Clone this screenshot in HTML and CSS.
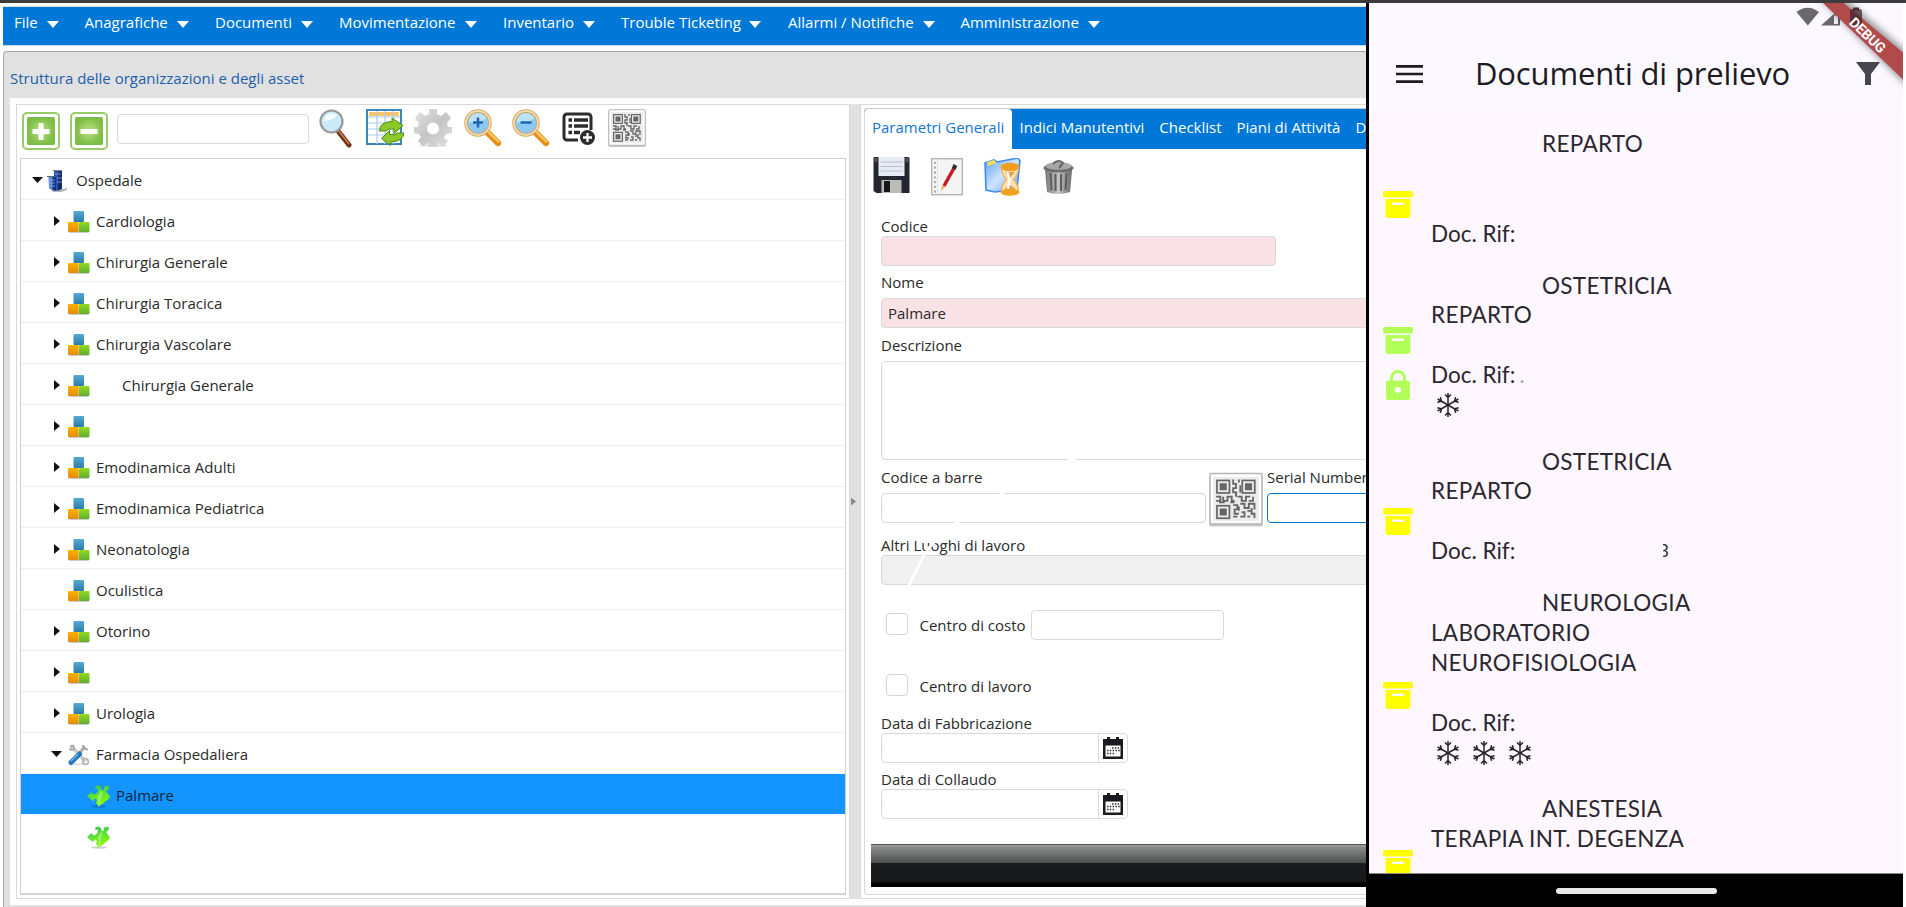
FILE: index.html
```html
<!DOCTYPE html>
<html lang="it">
<head>
<meta charset="utf-8">
<title>Struttura delle organizzazioni e degli asset</title>
<link rel="stylesheet" href="styles.css">
</head>
<body>
<svg class="defs" aria-hidden="true">
  <defs>
    <linearGradient id="gOrange" x1="0" y1="0" x2="0" y2="1"><stop offset="0" stop-color="#fbb400"/><stop offset="1" stop-color="#e58a0c"/></linearGradient>
    <linearGradient id="gGreen" x1="0" y1="0" x2="0" y2="1"><stop offset="0" stop-color="#93db1d"/><stop offset="1" stop-color="#5fae35"/></linearGradient>
    <linearGradient id="gBlue" x1="0" y1="0" x2="0" y2="1"><stop offset="0" stop-color="#55aad6"/><stop offset="1" stop-color="#2c7ba6"/></linearGradient>
    <linearGradient id="gPuzzle" x1="0" y1="0" x2=".3" y2="1"><stop offset="0" stop-color="#3fc04f"/><stop offset=".4" stop-color="#4fdc3c"/><stop offset="1" stop-color="#8dfa05"/></linearGradient>
    <radialGradient id="gBtn"><stop offset="0" stop-color="#b9e088"/><stop offset="1" stop-color="#7fbf45"/></radialGradient>
    <linearGradient id="gGear" x1="0" y1="0" x2="1" y2="1"><stop offset="0" stop-color="#e4e4e4"/><stop offset=".5" stop-color="#c4c4c4"/><stop offset="1" stop-color="#e2e2e2"/></linearGradient>
    <linearGradient id="gFolder" x1="0" y1="0" x2="1" y2="1"><stop offset="0" stop-color="#5aa0f5"/><stop offset=".5" stop-color="#cfe4fd"/><stop offset="1" stop-color="#5aa0f5"/></linearGradient>
    <linearGradient id="gBin" x1="0" y1="0" x2="1" y2="0"><stop offset="0" stop-color="#777"/><stop offset=".5" stop-color="#c4c4c4"/><stop offset="1" stop-color="#6a6a6a"/></linearGradient>
  </defs>
  <symbol id="cubes" viewBox="0 0 22 22">
    <rect x="1" y="20" width="20" height="2" rx="1" fill="#ccc"/>
    <rect x="5.5" y="0" width="10.5" height="11" rx="1" fill="url(#gBlue)"/>
    <rect x="0" y="11" width="10.7" height="10" rx="1" fill="url(#gOrange)"/>
    <rect x="11" y="11" width="10.5" height="10" rx="1" fill="url(#gGreen)"/>
  </symbol>
  <symbol id="building" viewBox="0 0 20 22">
    <path d="M3 19h14l3-1v2l-6 2H6z" fill="#b5b5b5"/>
    <path d="M7 1h8v17l-5 3-3-3z" fill="#2a52b4"/><path d="M11 1h4v18l-4 1.500z" fill="#142a6b"/>
    <path d="M1.500 7H7v13l-5-1.500z" fill="#5b87dc"/><path d="M5.500 7H9v14l-3.500-1z" fill="#17327e"/>
    <path d="M2 10h6M2 13h6M2 16h6M8 4h6M10 8h5M10 12h5" stroke="#a5c0f0" stroke-width=".7"/><path d="M0 6.500h7M6 .7h9" stroke="#666" stroke-width="1"/>
  </symbol>
  <symbol id="tools" viewBox="0 0 22 22">
    <path d="M4 19.500h15l-3 1.500H6z" fill="#ddd"/>
    <path d="M3.500 2.500l14 15" stroke="#a9a9a9" stroke-width="3.200" stroke-linecap="round"/>
    <path d="M3.500 3l14 14.500" stroke="#dedede" stroke-width="1.500"/>
    <circle cx="17.500" cy="17.500" r="3.300" fill="#c9c9c9" stroke="#999" stroke-width=".7"/><circle cx="18" cy="18" r="1.200" fill="#fff"/>
    <path d="M1.500 4.500Q2.500 6.500 5.500 5.500Q6.500 3 4.500 1" fill="none" stroke="#aaa" stroke-width="1.800"/>
    <path d="M10 11l7-8.500" stroke="#b0b0b0" stroke-width="3"/><path d="M15 1q0 4 5 4.500" fill="none" stroke="#a5a5a5" stroke-width="2"/>
    <path d="M3 18.500l8.500-8.500" stroke="#2878bd" stroke-width="5" stroke-linecap="round"/><path d="M3 17l7-7" stroke="#72b4e8" stroke-width="1.200"/>
  </symbol>
  <symbol id="puzzle" viewBox="0 0 23 23">
    <ellipse cx="12" cy="21.500" rx="8" ry="1.200" fill="#000" opacity=".2"/>
    <path d="M12 22L9 17.500Q11 14.500 8 13.500Q6 14 6.500 16.500L0 11L4.500 7Q6 10 8.500 9Q11 7 11 4L8 3.500Q8 .5 11.500 .5Q14.500 1 14 3.500L15.500 5Q18 5 16.500 2.500Q18 0 21.500 1L22 3Q21 6 19 6L23 11.500L21.500 14L17 17.500Q16 19 13 20z" fill="url(#gPuzzle)"/>
    <path d="M12 22L11 17Q12.500 13 10 12L12.500 8L14.500 5L16 8L14 13z" fill="#c9ffa6" opacity=".45"/>
  </symbol>
  <symbol id="qr" viewBox="0 0 38 38">
    <rect x="0" y="2" width="38" height="36" rx="2" fill="#c9c9c9"/>
    <rect x=".75" y=".75" width="36.500" height="35.500" rx="1" fill="#fff" stroke="#b5b5b5" stroke-width="1"/>
    <rect x="3" y="3" width="32" height="31" fill="#ececec"/>
    <g fill="none" stroke="#666" stroke-width="1.200"><rect x="5.600" y="5.600" width="8.800" height="8.800"/><rect x="23.400" y="5.600" width="8.800" height="8.800"/><rect x="5.600" y="23.400" width="8.800" height="8.800"/></g>
    <path d="M7.500 7.500h5v5h-5zM25.300 7.500h5v5h-5zM7.500 25.300h5v5h-5z" fill="#666"/>
    <path d="M17 5v3h2v3h-2v3h3M21 5v2M22 9v5M19 14v3M5 17h3v3H5M10 17v3h3v-3h3v3h2M7 21h4M15 21h3M20 17h3v3h3v-3h3M31 17v3h-3M17 23h3v3h-2v3h3M22 22h3v3h3v-3h4v4M23 28h2v3h-3M27 27h3v2h2v3M17 31h3M27 31h2M21 24v3M30 25v2" fill="none" stroke="#666" stroke-width="1.300"/>
  </symbol>
  <symbol id="zoomglass" viewBox="0 0 38 38">
    <path d="M23 23l11 11" stroke="#e58f1b" stroke-width="6.500" stroke-linecap="round"/><path d="M24 22.500l10.500 10" stroke="#ffc25c" stroke-width="2.500" stroke-linecap="round"/>
    <circle cx="14" cy="14" r="12" fill="#8cc8f2" stroke="#d0a660" stroke-width="3.500"/><circle cx="14" cy="14" r="12" fill="none" stroke="#f4dba8" stroke-width="1.800"/>
    <path d="M4.500 13a9.500 9.500 0 0 1 18-3.500Q14 15 4.500 13z" fill="#cbe8fb" opacity=".8"/>
  </symbol>
  <symbol id="cal" viewBox="0 0 20 22">
    <path d="M0 2h4V0h3v2h6V0h3v2h4v20H0z" fill="#1b1b1f"/><path d="M2.500 8.500h15v11h-15z" fill="#fff"/>
    <path d="M9 11h8M4 13.500h13M4 16.500h8" stroke="#333" stroke-width="1.300" stroke-dasharray="1.500 1.300"/>
  </symbol>
  <symbol id="box" viewBox="0 0 30 27">
    <rect x="0" y="0" width="30" height="6.500" rx="1.700"/>
    <path fill-rule="evenodd" d="M2.500 8h25v16a3 3 0 0 1-3 3h-19a3 3 0 0 1-3-3zM10.200 11.500a1 1 0 0 0 0 2.500h9.600a1 1 0 0 0 0-2.500z"/>
  </symbol>
  <symbol id="snow" viewBox="0 0 24 24">
    <g fill="none" stroke="#27232b" stroke-width="1.500">
      <path d="M12 0v24M9 1.500l3 3 3-3M9 22.500l3-3 3 3"/>
      <path transform="rotate(60 12 12)" d="M12 0v24M9 1.500l3 3 3-3M9 22.500l3-3 3 3"/>
      <path transform="rotate(120 12 12)" d="M12 0v24M9 1.500l3 3 3-3M9 22.500l3-3 3 3"/>
    </g>
  </symbol>
</svg>

<div class="app">
  <nav class="menu">
    <span class="menu-item m1">File</span>
    <span class="menu-item m2">Anagrafiche</span>
    <span class="menu-item m3">Documenti</span>
    <span class="menu-item m4">Movimentazione</span>
    <span class="menu-item m5">Inventario</span>
    <span class="menu-item m6">Trouble Ticketing</span>
    <span class="menu-item m7">Allarmi / Notifiche</span>
    <span class="menu-item m8">Amministrazione</span>
  </nav>

  <main class="window">
    <h1 class="window-title">Struttura delle organizzazioni e degli asset</h1>
    <div class="window-body">
      <section class="left">
        <div class="toolbar">
          <svg class="t-plus" viewBox="0 0 38 38"><rect x="1" y="1" width="36" height="36" rx="4" fill="#fff" stroke="#97cc68" stroke-width="2"/><rect x="5.700" y="5.700" width="26.600" height="26.600" rx="1" fill="url(#gBtn)" stroke="#7ab648" stroke-width="1.200"/><path d="M16.500 11h5v6h6v5h-6v6h-5v-6h-6v-5h6z" fill="#fff"/></svg>
          <svg class="t-minus" viewBox="0 0 38 38"><rect x="1" y="1" width="36" height="36" rx="4" fill="#fff" stroke="#97cc68" stroke-width="2"/><rect x="5.700" y="5.700" width="26.600" height="26.600" rx="1" fill="url(#gBtn)" stroke="#7ab648" stroke-width="1.200"/><path d="M10.500 17h17v5h-17z" fill="#fff"/></svg>
          <input class="search" type="text">
          <svg class="t-find" viewBox="0 0 34 39"><path d="M19 22l11 14" stroke="#6e3216" stroke-width="5" stroke-linecap="round"/><path d="M19 21l11 14" stroke="#c77c4c" stroke-width="1.700"/><circle cx="12.500" cy="12.500" r="11" fill="#c9ebf8" stroke="#999" stroke-width="2.200"/><path d="M5 12a8 8 0 0 1 13-6Q14 12 5 12z" fill="#f1fbff"/></svg>
          <svg class="t-table" viewBox="0 0 38 38"><rect x="1" y="1" width="34" height="34" fill="#fff" stroke="#3a88bd" stroke-width="2"/><path d="M3 3h30v4H3z" fill="#fdc566"/><path d="M2 8h32M2 14h32M2 20h32M2 26h32M11 2v33M19 2v33M27 2v33" stroke="#a8cdea" stroke-width="1.200"/><path d="M13.500 22q0-9 12.500-9.500V9l11 7.500-9 8V20q-6-1-8 2z" fill="#8cc929" stroke="#4a8d18"/><path d="M38 24q-1 8.500-13.500 9v3.500l-9-7 8-8v4q6 1 8-1.500z" fill="#8cc929" stroke="#4a8d18"/></svg>
          <svg class="t-gear" viewBox="0 0 38 38"><path d="M6 36.500h26" stroke="#ddd" stroke-width="2"/><path fill="url(#gGear)" fill-rule="evenodd" d="M15 0h8v5l4 2 5-4 5 6-4 5 1 4h4v6l-6 1-2 4 4 3-5 5-5-3-1 4h-8l-1-4-5 3-5-5 3-4-2-3-5-1v-6h4l1-4-4-5 5-6 5 4 4-2zM19 13.500a6 6 0 1 0 0 12 6 6 0 0 0 0-12z"/></svg>
          <svg class="t-zin" viewBox="0 0 38 38"><use href="#zoomglass"/><path d="M14 8.500v10M9 13.500h10" stroke="#1768b0" stroke-width="2.500"/></svg>
          <svg class="t-zout" viewBox="0 0 38 38"><use href="#zoomglass"/><path d="M8.500 13.500h11" stroke="#1768b0" stroke-width="2.500"/></svg>
          <svg class="t-list" viewBox="0 0 33 33"><path d="M16 28H5a3 3 0 0 1-3-3V5a3 3 0 0 1 3-3h21a3 3 0 0 1 3 3v13" fill="none" stroke="#2c2c2c" stroke-width="3"/><path d="M6.500 8h3.500M6.500 14h3.500M6.500 20.500h3.500M12 8h14M12 14h14M12 20.500h6" stroke="#2c2c2c" stroke-width="3.500"/><circle cx="25.500" cy="25.500" r="7.500" fill="#2c2c2c"/><path d="M25.500 21v9M21 25.500h9" stroke="#fff" stroke-width="2.300"/></svg>
          <svg class="t-qr"><use href="#qr"/></svg>
        </div>
        <ul class="tree">
          <li class="row l0"><i class="arrow down"></i><svg class="ico b"><use href="#building"/></svg><span>Ospedale</span></li>
          <li class="row"><i class="arrow"></i><svg class="ico"><use href="#cubes"/></svg><span>Cardiologia</span></li>
          <li class="row"><i class="arrow"></i><svg class="ico"><use href="#cubes"/></svg><span>Chirurgia Generale</span></li>
          <li class="row"><i class="arrow"></i><svg class="ico"><use href="#cubes"/></svg><span>Chirurgia Toracica</span></li>
          <li class="row"><i class="arrow"></i><svg class="ico"><use href="#cubes"/></svg><span>Chirurgia Vascolare</span></li>
          <li class="row"><i class="arrow"></i><svg class="ico"><use href="#cubes"/></svg><span class="inset">Chirurgia Generale</span></li>
          <li class="row"><i class="arrow"></i><svg class="ico"><use href="#cubes"/></svg></li>
          <li class="row"><i class="arrow"></i><svg class="ico"><use href="#cubes"/></svg><span>Emodinamica Adulti</span></li>
          <li class="row"><i class="arrow"></i><svg class="ico"><use href="#cubes"/></svg><span>Emodinamica Pediatrica</span></li>
          <li class="row"><i class="arrow"></i><svg class="ico"><use href="#cubes"/></svg><span>Neonatologia</span></li>
          <li class="row"><i class="arrow none"></i><svg class="ico"><use href="#cubes"/></svg><span>Oculistica</span></li>
          <li class="row"><i class="arrow"></i><svg class="ico"><use href="#cubes"/></svg><span>Otorino</span></li>
          <li class="row"><i class="arrow"></i><svg class="ico"><use href="#cubes"/></svg></li>
          <li class="row"><i class="arrow"></i><svg class="ico"><use href="#cubes"/></svg><span>Urologia</span></li>
          <li class="row"><i class="arrow down"></i><svg class="ico"><use href="#tools"/></svg><span>Farmacia Ospedaliera</span></li>
          <li class="row l2 selected"><svg class="ico p"><use href="#puzzle"/></svg><span>Palmare</span></li>
          <li class="row l2 last"><svg class="ico p"><use href="#puzzle"/></svg></li>
        </ul>
      </section>

      <div class="splitter"><i></i></div>

      <section class="right">
        <div class="tabs">
          <span class="tab active">Parametri Generali</span>
          <span class="tab">Indici Manutentivi</span>
          <span class="tab">Checklist</span>
          <span class="tab">Piani di Attività</span>
          <span class="tab">D</span>
        </div>
        <div class="panel">
          <div class="actions">
            <svg class="a-save" viewBox="0 0 36 37"><path d="M1 0h34l1 1v35H3l-3-2V1z" fill="#23262e"/><path d="M5 0h26v19H5z" fill="#e7ecf2"/><path d="M7 5h22M7 9.500h22M7 14h22" stroke="#b9c0c9"/><path d="M8 23h20v13H8z" fill="#bdbbb6"/><path d="M10.500 24h6v11h-6z" fill="#14161b"/><path d="M1 1h3v4H1zM32 1h3v4h-3z" fill="#555"/></svg>
            <svg class="a-note" viewBox="0 0 32 38"><rect x=".7" y=".7" width="30.600" height="36" fill="#f5f5f5" stroke="#b4b4b4" stroke-width="1.400"/><path d="M6.500 1v35" stroke="#e2e2e2"/><path d="M4 4v31" stroke="#999" stroke-width="1.800" stroke-dasharray="1.800 3"/><path d="M13 28L23 10" stroke="#c91c22" stroke-width="3.500"/><path d="M22.500 11l2-4" stroke="#333" stroke-width="4"/><path d="M11.300 27.200l3.200 1.800-5 4z" fill="#e4b269"/></svg>
            <svg class="a-folder" viewBox="0 0 38 38"><path d="M2 5l9-3 3 2L35 0l2 3-3 28-22 3-9-2z" fill="url(#gFolder)" stroke="#3f8df2" stroke-width="1.600"/><path d="M4 4l7-2 3 3-9 3z" fill="#f2dd59"/><path d="M18.500 9h17q0 7-5 12.500Q35.500 27 35.500 34h-17q0-7 5-12.500Q18.500 16 18.500 9z" fill="#fbe3b8" stroke="#f3b660" stroke-width="1.500"/><path d="M20.500 33q6.500-11 13 0zM22 14h10l-5 6z" fill="#e2a350"/><path d="M24.500 14l2 7-1.500 10" fill="none" stroke="#fff" stroke-width="2"/><ellipse cx="27" cy="9" rx="9.500" ry="4.200" fill="#f09d22"/><ellipse cx="27" cy="34.300" rx="9.500" ry="3.400" fill="#f0a11f"/></svg>
            <svg class="a-bin" viewBox="0 0 31 35"><path d="M2 10h27l-2 22q-11.500 4-23 0z" fill="url(#gBin)"/><path d="M7.500 13l1 17M12.500 14v17M18 14v17M23.500 13l-1 17" stroke="#5d5d5d" stroke-width="2"/><ellipse cx="15.500" cy="8" rx="15" ry="4.500" fill="#6d6d6d"/><ellipse cx="15.500" cy="6" rx="13" ry="3.800" fill="#a8a8a8"/><path d="M10 4q5-5 10-1l-4 5" fill="none" stroke="#666" stroke-width="2.200"/></svg>
          </div>
          <form class="form">
            <div class="field f-code"><label>Codice</label><input class="required" type="text"></div>
            <div class="field f-name"><label>Nome</label><input class="required" type="text" value="Palmare"></div>
            <div class="field f-desc"><label>Descrizione</label><textarea></textarea></div>
            <div class="line">
              <div class="field f-bar"><label>Codice a barre</label><input type="text"></div>
              <svg class="qr-big"><use href="#qr"/></svg>
              <div class="field f-serial"><label>Serial Number</label><input type="text"></div>
            </div>
            <div class="field f-places"><label>Altri Luoghi di lavoro</label><input type="text" disabled></div>
            <div class="check c1"><i></i><label>Centro di costo</label><input type="text"></div>
            <div class="check c2"><i></i><label>Centro di lavoro</label></div>
            <div class="field f-made"><label>Data di Fabbricazione</label><div class="date"><span></span><b><svg><use href="#cal"/></svg></b></div></div>
            <div class="field f-test"><label>Data di Collaudo</label><div class="date"><span></span><b><svg><use href="#cal"/></svg></b></div></div>
          </form>
          <div class="bottom-bar"></div>
          <svg class="arc" viewBox="900 450 180 140"><path d="M908 587Q919 566 924 555Q934 539 957 522.500Q978 509 1002 493.500Q1035 474 1076 457.500" fill="none" stroke="#fff" stroke-width="3"/></svg>
        </div>
      </section>
    </div>
  </main>
</div>

<aside class="phone">
  <header class="bar">
    <svg class="burger" viewBox="0 0 27 18"><path d="M0 1.400h27M0 9h27M0 16.600h27" stroke="#1c1b22" stroke-width="2.600"/></svg>
    <h2>Documenti di prelievo</h2>
    <svg class="filter" viewBox="0 0 24 23"><path d="M0 0h24l-9 12v11H9V12z" fill="#45464f"/></svg>
  </header>
  <div class="list">
    <article class="doc d1">
      <div class="marks"><svg class="box yellow"><use href="#box"/></svg></div>
      <div class="lines"><p class="dept">REPARTO</p><p></p><p></p><p class="ref">Doc. Rif:</p></div>
    </article>
    <article class="doc d2">
      <div class="marks"><svg class="box green"><use href="#box"/></svg>
        <svg class="lock green" viewBox="0 0 24 30"><path d="M5.500 12V8a6.500 6.500 0 0 1 13 0v4" fill="none" stroke="#b2ff59" stroke-width="3"/><path fill-rule="evenodd" d="M2.500 10.500h19a2.500 2.500 0 0 1 2.500 2.500v14.500a2.500 2.500 0 0 1-2.500 2.500h-19A2.500 2.500 0 0 1 0 27.500V13a2.500 2.500 0 0 1 2.500-2.500zM12 17a3 3 0 1 0 0 6 3 3 0 0 0 0-6z"/></svg></div>
      <div class="lines"><p class="dept">OSTETRICIA</p><p>REPARTO</p><p></p><p class="ref">Doc. Rif:<span class="dot">.</span></p><p class="cold"><svg><use href="#snow"/></svg></p></div>
    </article>
    <article class="doc d3">
      <div class="marks"><svg class="box yellow"><use href="#box"/></svg></div>
      <div class="lines"><p class="dept">OSTETRICIA</p><p>REPARTO</p><p></p><p class="ref">Doc. Rif:<span class="cut">3</span></p></div>
    </article>
    <article class="doc d4">
      <div class="marks"><svg class="box yellow"><use href="#box"/></svg></div>
      <div class="lines"><p class="dept">NEUROLOGIA</p><p>LABORATORIO</p><p>NEUROFISIOLOGIA</p><p></p><p class="ref">Doc. Rif:</p><p class="cold"><svg><use href="#snow"/></svg><svg><use href="#snow"/></svg><svg><use href="#snow"/></svg></p></div>
    </article>
    <article class="doc d5">
      <div class="marks"><svg class="box yellow"><use href="#box"/></svg></div>
      <div class="lines"><p class="dept">ANESTESIA</p><p>TERAPIA INT. DEGENZA</p></div>
    </article>
  </div>
  <footer class="nav"><i></i></footer>
  <svg class="status" viewBox="1783 3 120 90">
    <defs><filter id="soft" x="-20%" y="-20%" width="140%" height="140%"><feGaussianBlur stdDeviation="3.500"/></filter></defs>
    <path d="M1796.500 12q11-8.500 22.500 0l-11.200 13.500z" fill="#69676c"/>
    <path d="M1821 25.500L1840 8.500v17z" fill="#69676c"/><path d="M1834 15.500h4v8.500h-4z" fill="#f5f2fa"/>
    <path d="M1820 -1L1845 -1L1907 52V86z" fill="#000" opacity=".4" filter="url(#soft)"/>
    <path d="M1823 3h20.500L1903 52.500V79.500z" fill="#b14a4b"/>
    <rect x="1850" y="9" width="12" height="17" rx="2.500" fill="#3c2428" opacity=".72"/><rect x="1853" y="7.500" width="6" height="3" fill="#4a3035"/>
    <text x="1868.500" y="40" transform="rotate(44 1868 34)" text-anchor="middle" class="debug" textLength="44">DEBUG</text>
  </svg>
</aside>
</body>
</html>
```

FILE: styles.css
```css
* { box-sizing: border-box; }
body { margin: 0; width: 1906px; height: 907px; overflow: hidden; background: #fff; border-top: 3px solid #3c3c3c; position: relative; font: 15px/21px "Open Sans", "Noto Sans", sans-serif; color: #2a2a2a; }
.defs { position: absolute; width: 0; height: 0; }
svg { display: block; flex: none; }
ul, h1, h2, p { margin: 0; padding: 0; font-weight: normal; list-style: none; }
input, textarea { font: inherit; color: inherit; border: 1px solid #d9d9d9; border-radius: 4px; background: #fff; margin: 0; padding: 0 6px; height: 30px; outline: 0; resize: none; display: block; }

.app { width: 1380px; padding: 3px 0 0 3px; }
.menu { height: 40px; background: #0078d7; border-top: 1px solid #ddd; border-bottom: 1px solid #ccdbe8; padding: 4px 0 0 11px; display: flex; color: #fff; white-space: nowrap; }
.menu-item { display: flex; flex: none; align-items: center; justify-content: space-between; height: 23px; }
.menu-item::after { content: ""; border: 6.5px solid transparent; border-top: 7px solid #fff; border-bottom: 0; margin-top: 4px; }
.m1 { width: 45px; margin-right: 25.500px; }
.m2 { width: 104.500px; margin-right: 26px; }
.m3 { width: 98px; margin-right: 26px; }
.m4 { width: 138px; margin-right: 26px; }
.m5 { width: 92px; margin-right: 26px; }
.m6 { width: 140px; margin-right: 27px; }
.m7 { width: 147px; margin-right: 25.500px; }
.m8 { width: 139.500px; }

.window { margin-top: 5px; height: 860px; background: #e1e1e1; border: 1px solid #a5a5a5; border-right: 0; border-radius: 4px 0 0 0; padding-left: 4px; }
.window-title { height: 46px; padding: 16px 0 0 2px; font-size: 15px; line-height: 21px; color: #1b5fae; }
.window-body { margin-left: 2px; height: 807px; background: #fff; display: flex; padding: 6px 0 6px 6px; }
.left { width: 834px; border: 1px solid #d9d9d9; padding: 4px 3px 0; }
.toolbar { height: 49px; display: flex; align-items: flex-start; padding-left: 2px; }
.t-plus, .t-minus { width: 38px; height: 38px; margin-top: 3px; }
.t-minus { margin-left: 10px; }
.search { width: 192px; margin: 5px 0 0 9px; }
.t-find { width: 34px; height: 39px; margin-left: 10px; }
.t-table { width: 38px; height: 38px; margin-left: 13px; }
.t-gear, .t-zin, .t-zout { width: 38px; height: 38px; margin-left: 10px; }
.t-zin { margin-left: 12px; }
.t-list { width: 33px; height: 33px; margin: 3px 0 0 12px; }
.t-qr { width: 38px; height: 38px; margin-left: 13px; }
.tree { height: 737px; border: 1px solid #d0d0d0; position: relative; }
.tree::after { content: ""; display: block; border-top: 1px solid #d9d9d9; margin-top: 37px; }
.row { height: 41px; border-bottom: 1px solid #efefef; display: flex; align-items: center; padding: 2px 0 0 32px; white-space: nowrap; }
.row span { margin-left: 7px; }
.l0 { padding-left: 8px; }
.l2 { padding-left: 66px; }
.row .inset { margin-left: 33px; }
.selected { background: #1494ff; border-color: #fff; color: #10243a; }
.last { border: 0; }
.arrow { width: 6px; height: 10px; margin: 0 8px 0 1px; background: #111; clip-path: polygon(0 0, 100% 50%, 0 100%); flex: none; }
.arrow.down { width: 11px; height: 6px; margin: 0 6px 0 -2px; clip-path: polygon(0 0, 100% 0, 50% 100%); }
.l0 .arrow.down { margin: 0 4px 0 3px; }
.arrow.none { visibility: hidden; }
.ico { width: 22px; height: 22px; margin-right: -1px; position: relative; top: 1px; }
.ico.b { width: 20px; margin-right: 2px; }
.ico.p { width: 23px; height: 23px; margin-right: 0; }
.l2 span { margin-left: 6px; }

.splitter { width: 10px; background: #e1e1e1; display: flex; align-items: center; justify-content: flex-start; }
.splitter i { width: 5px; height: 8px; margin-left: 1px; background: #888; clip-path: polygon(0 0, 100% 50%, 0 100%); }
.right { flex: 1; border: 1px solid #d9d9d9; padding: 3px 0 0 3px; min-width: 0; }
.tabs { height: 41px; border-top: 1px solid #c9c9c9; background: #0078d7; border-radius: 4px 0 0 0; display: flex; color: #fff; white-space: nowrap; }
.tab { padding: 8px 7.500px 0; height: 40px; }
.tab.active { width: 148px; background: #fff; color: #1475d2; border-left: 1px solid #d9d9d9; border-radius: 4px 4px 0 0; padding-left: 7px; }
.panel { position: relative; height: 746px; border: 1px solid #d9d9d9; border-top: 0; border-right: 0; border-radius: 0 0 0 4px; }
.actions { height: 66px; padding: 8px 0 0 8px; display: flex; align-items: flex-start; }
.a-save { width: 37px; height: 37px; }
.a-note { width: 32px; height: 38px; margin: 1px 0 0 21px; }
.a-folder { width: 38px; height: 38px; margin: 1px 0 0 20px; }
.a-bin { width: 31px; height: 35px; margin: 3px 0 0 22px; }
.form { padding-left: 16px; height: 629px; }
label { display: block; height: 21px; line-height: 23px; white-space: nowrap; }
.required { background: #f9e2e5; }
.f-code input { width: 395px; }
.f-name { margin-top: 6px; }
.f-name label { line-height: 21px; }
.f-name input { width: 100%; margin-top: 5px; }
.f-desc { margin-top: 6px; }
.f-desc textarea { width: 100%; height: 99px; margin-top: 6px; }
.line { display: flex; margin-top: 6px; height: 68px; }
.f-bar { width: 325px; }
.f-bar input, .f-serial input { width: 100%; margin-top: 6px; }
.qr-big { width: 54px; height: 55px; margin: 6px 4px 0 3px; }
.f-serial { flex: 1; }
.f-serial input { border-color: #0078d7; }
.f-places input { width: 100%; background: #f0f0f0; }
.check { display: flex; padding-left: 5px; }
.check i { width: 22px; height: 22px; border: 1px solid #d5d5d5; border-radius: 4px; }
.check label { margin-left: 11.500px; }
.c1 { margin-top: 25px; height: 30px; }
.c1 i { margin-top: 3px; }
.c1 label { margin-top: 4px; width: 105.500px; }
.c1 input { width: 193px; margin-left: 6px; }
.c2 { margin-top: 34px; height: 22px; }
.c2 label { margin-top: 1px; }
.f-made { margin-top: 16px; }
.f-test { margin-top: 5px; }
.date { width: 247px; height: 30px; border: 1px solid #d9d9d9; border-radius: 4px; display: flex; }
.date span { flex: 1; border-right: 1px solid #d9d9d9; }
.date b { width: 28px; padding: 3px 4px; }
.date svg { width: 20px; height: 22px; }
.bottom-bar { margin-left: 6px; height: 43px; background: linear-gradient(#555 0 1px, #999 1px 2px, #8a8c8b 3px, #4c4e4e 19px, #1b1c1e 19px, #17181a 38px, #000 39px); }
.arc { position: absolute; left: 35px; top: 301px; width: 180px; height: 140px; }

.phone { position: absolute; left: 1366px; top: 0; width: 537px; height: 904px; background: #fef7ff; border-left: 3px solid #000; color: #2b272f; font-family: Lato, sans-serif; overflow: hidden; box-shadow: 3px 0 0 #fff; }
.bar { height: 110px; background: #fbf8ff; display: flex; align-items: flex-start; }
.burger { width: 27px; height: 18px; margin: 62px 0 0 27px; }
.bar h2 { font: 31px/42px "Open Sans", sans-serif; letter-spacing: -.15px; margin: 49px 0 0 52px; width: 316px; white-space: nowrap; color: #1c1b22; }
.filter { width: 24px; height: 23px; margin: 59px 0 0 65px; }
.list { height: 760px; padding-top: 16px; overflow: hidden; }
.doc { display: grid; grid-template-columns: 62px 1fr; padding-bottom: 22px; }
.lines p { height: 29.900px; font-size: 22.500px; line-height: 29.900px; letter-spacing: .3px; white-space: nowrap; display: flex; }
.lines .ref { letter-spacing: 0; }
.lines .dept { padding-left: 111px; }
.marks { padding: 62px 0 0 14px; }
.d2 .marks { padding-top: 56px; }
.d3 .marks { padding-top: 61px; }
.d4 .marks { padding-top: 94px; }
.d5 .marks { padding-top: 56px; }
.box { width: 30px; height: 27px; }
.lock { width: 24px; height: 30px; margin: 16px 0 0 3px; }
.yellow { fill: #ff0; }
.green { fill: #b2ff59; }
.lines .cold { height: 34.400px; padding: 3px 0 0 5px; gap: 12px; }
.cold svg { width: 24px; height: 24px; }
.dot { margin-left: 4px; color: #aaa; }
.cut { margin-left: 143px; font-size: 18px; clip-path: inset(0 0 0 45%); }
.nav { height: 34px; background: #000; border-top: 1px solid #888; padding: 14px 0 0 187px; }
.nav i { display: block; width: 161px; height: 6px; border-radius: 3px; background: #e8e8e8; }
.status { position: absolute; right: 0; top: 0; width: 120px; height: 90px; }
.debug { font: bold 14px Roboto, sans-serif; fill: #fff; }
```
